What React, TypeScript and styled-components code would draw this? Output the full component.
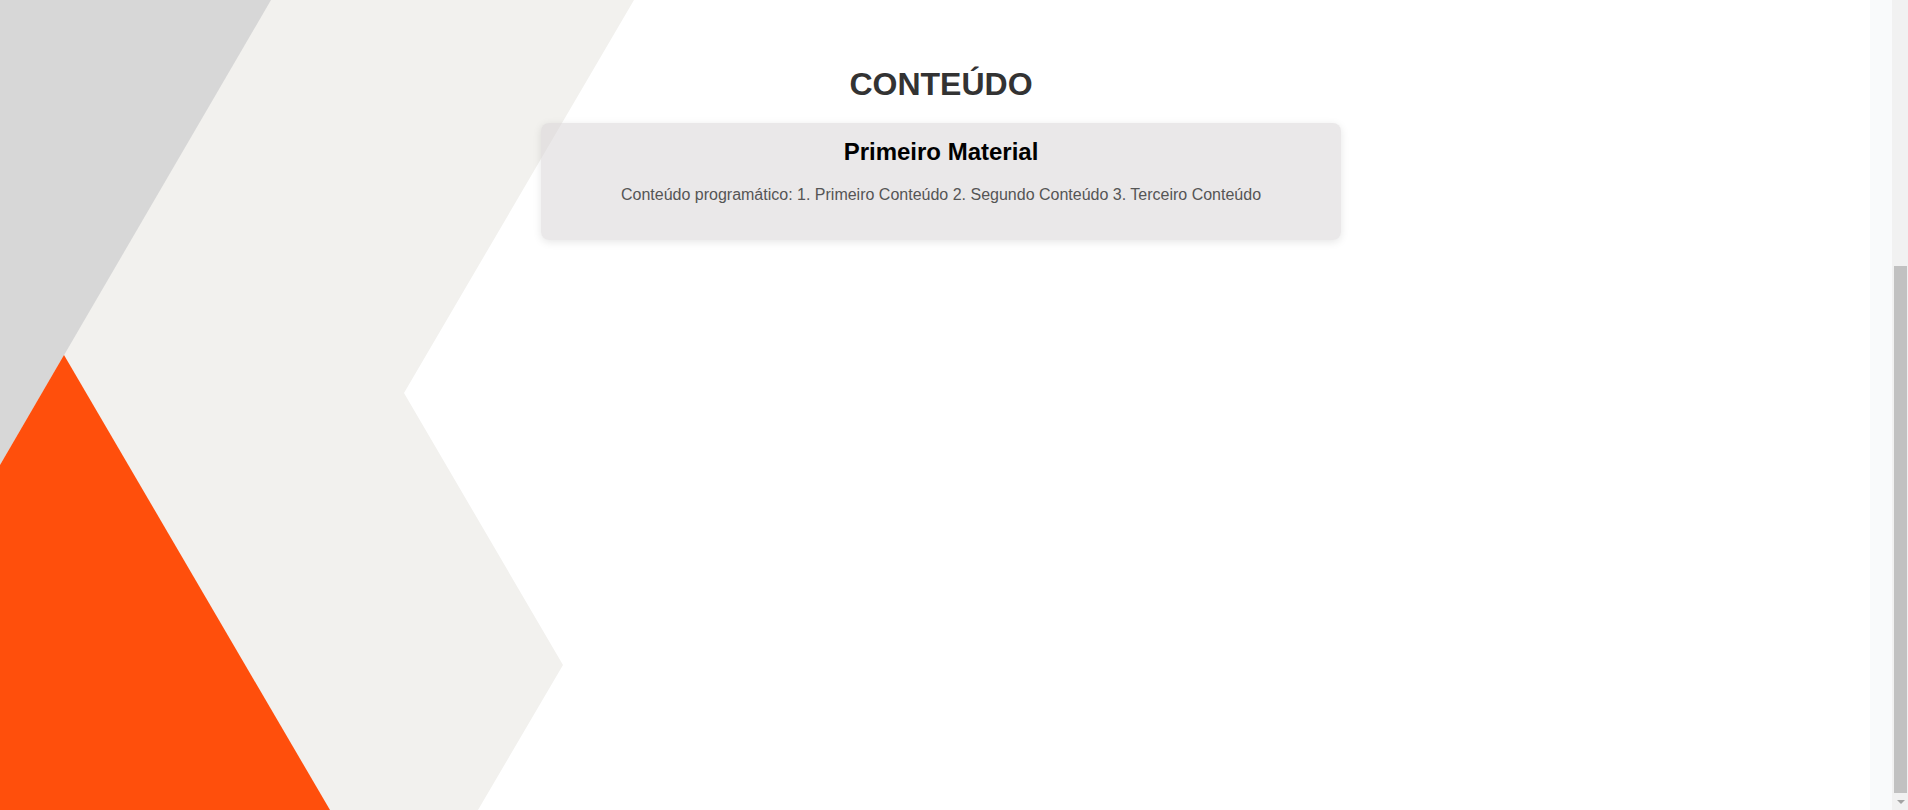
import React from "react";
import styled, { createGlobalStyle } from "styled-components";

const GlobalStyle = createGlobalStyle`
  html, body {
    margin: 0;
    padding: 0;
    height: 100%;
    overflow: hidden;
    background: #ffffff;
    font-family: "Liberation Sans", Arial, sans-serif;
  }
  #root { height: 100%; }
  * { box-sizing: border-box; }
`;

const Page = styled.div`
  display: flex;
  width: 100%;
  height: 810px;
`;

const Main = styled.main`
  position: relative;
  flex: 1;
  overflow: hidden;
  background: #ffffff;
  padding-left: 12px;
`;

const Backdrop = styled.svg`
  position: absolute;
  inset: 0;
  width: 100%;
  height: 100%;
  z-index: 0;
`;

const Content = styled.div`
  position: relative;
  z-index: 1;
  display: flex;
  flex-direction: column;
  align-items: center;
  padding-top: 66px;
`;

const Title = styled.h1`
  margin: 0 0 20px;
  font-size: 32px;
  line-height: 37px;
  font-weight: 700;
  color: #333333;
`;

const Card = styled.section`
  width: 800px;
  padding: 15px 20px 20px;
  border-radius: 8px;
  background: rgba(213, 209, 211, 0.5);
  box-shadow: 0 2px 8px rgba(0, 0, 0, 0.1);
  text-align: center;
`;

const CardTitle = styled.h2`
  margin: 0 0 20px;
  font-size: 24px;
  line-height: 28px;
  font-weight: 700;
  color: #000000;
`;

const CardText = styled.p`
  margin: 0 0 16px;
  font-size: 16px;
  line-height: 18px;
  color: #555555;
`;

const Strip = styled.div`
  width: 22px;
  background: #f9fafb;
`;

const Track = styled.div`
  width: 16px;
  display: flex;
  flex-direction: column;
  background: #f1f1f1;
`;

const Thumb = styled.div`
  margin: 266px 1px 0 2px;
  height: 527px;
  background: #c1c1c1;
`;

const ArrowBox = styled.div`
  flex: 1;
  display: flex;
  align-items: center;
  justify-content: center;
  padding-left: 1px;
`;

const ArrowDown = styled.div`
  width: 0;
  height: 0;
  border-left: 4px solid transparent;
  border-right: 4px solid transparent;
  border-top: 4px solid #a3a3a3;
`;

export default function App() {
  return (
    <>
      <GlobalStyle />
      <Page>
        <Main>
          <Backdrop aria-hidden="true">
            <polygon
              points="0,0 634,0 404,393 563,665 478,810 0,810"
              fill="#f2f1ee"
            />
            <polygon points="0,0 271,0 0,465" fill="#d7d7d7" />
            <polygon points="64,355 330,810 0,810 0,465" fill="#ff4f0c" />
          </Backdrop>
          <Content>
            <Title>CONTEÚDO</Title>
            <Card>
              <CardTitle>Primeiro Material</CardTitle>
              <CardText>
                Conteúdo programático: 1. Primeiro Conteúdo 2. Segundo Conteúdo
                3. Terceiro Conteúdo
              </CardText>
            </Card>
          </Content>
        </Main>
        <Strip />
        <Track>
          <Thumb />
          <ArrowBox>
            <ArrowDown />
          </ArrowBox>
        </Track>
      </Page>
    </>
  );
}
